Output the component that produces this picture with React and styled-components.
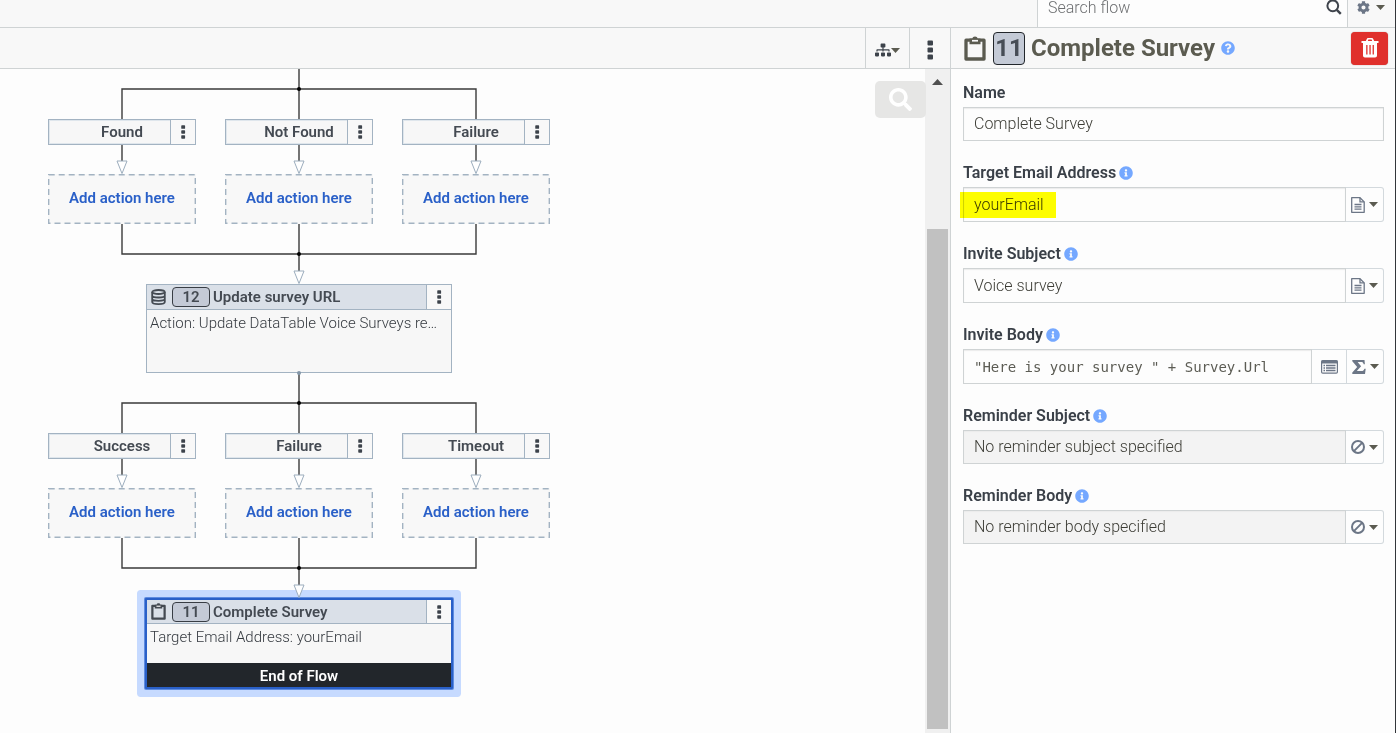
import React from 'react';
import styled, { createGlobalStyle, css } from 'styled-components';
import { FaCog, FaInfoCircle, FaQuestionCircle, FaSitemap, FaSearch } from 'react-icons/fa';

const color = {
  page: '#fdfdfd',
  bar: '#f8f8f8',
  line: '#cfd3d4',
  ink: '#444a52',
  olive: '#5b5b50',
  slate: '#6c7686',
  node: '#a3b3c2',
  blue: '#2a60c8',
  info: '#75a8ff',
};

const GlobalStyle = createGlobalStyle`
  *, *::before, *::after { box-sizing: border-box; }
  body { margin: 0; background: ${color.page}; color: ${color.ink}; font: 16px/20px Roboto, sans-serif; }
  button, input { font: inherit; color: inherit; margin: 0; padding: 0; border: 0; background: none; border-radius: 0; outline: 0; }
  button { cursor: pointer; }
  svg { display: block; flex: none; }
`;

/* ---------- icons ---------- */

const Caret = () => (
  <svg width="9" height="5" viewBox="0 0 9 5" fill={color.olive}><path d="M0 0h9L4.500 5z" /></svg>
);

const Dots = ({ size }) => (
  <svg width={size} height={size} viewBox="0 0 20 20" fill="currentColor">
    <rect x="7.500" y="0.500" width="5.500" height="5" rx="1" />
    <rect x="7.500" y="7.500" width="5.500" height="5" rx="1" />
    <rect x="7.500" y="14.500" width="5.500" height="5" rx="1" />
  </svg>
);

const Clipboard = ({ width, height }) => (
  <svg width={width} height={height} viewBox="0 0 22 25" fill="none" stroke="currentColor">
    <path d="M2 4.200h18v18.800H2z" strokeWidth="3.300" strokeLinejoin="round" />
    <path d="M5.500 2.600h2.800C8.600 1.100 9.600.4 11 .4s2.400.7 2.700 2.200h2.800v5.600h-11z" fill="currentColor" stroke="none" />
    <path d="M8 3.900h6v1.700H8z" fill={color.bar} stroke="none" />
  </svg>
);

const Database = () => (
  <svg width="15" height="16" viewBox="0 0 15 16" fill="none" stroke="currentColor" strokeWidth="1.800">
    <ellipse cx="7.500" cy="3" rx="6.300" ry="2" />
    <path d="M1.200 3v10c0 1.200 2.800 2.100 6.300 2.100s6.300-.9 6.300-2.100V3M1.200 6.500c0 1.200 2.800 2 6.300 2s6.300-.8 6.300-2M1.200 9.800c0 1.200 2.800 2 6.300 2s6.300-.8 6.300-2" />
  </svg>
);

const Magnifier = () => (
  <svg width="16" height="16" viewBox="0 0 16 16" fill="none" stroke="#3f444c" strokeWidth="2">
    <circle cx="6.800" cy="6.800" r="5.400" />
    <path d="M10.800 10.800l4 4" strokeWidth="2.400" />
  </svg>
);

const Trash = () => (
  <svg width="18" height="20" viewBox="0 0 18 20" fill="#fff">
    <path d="M.5 3h4.300l1-2.100C6 .3 6.400 0 7 0h4c.6 0 1 .3 1.200.9l1 2.100h4.300v2H16v12.500c0 1.200-.8 2-1.900 2H3.900C2.800 19.500 2 18.700 2 17.500V5H.5zM6.800 3h4.400l-.6-1.400H7.400z" fillRule="evenodd" />
    <path d="M5.200 7h1.300v9.500H5.200zM8.400 7h1.300v9.500H8.400zM11.600 7h1.300v9.500h-1.300z" fill="#e0302c" />
  </svg>
);

const FileIcon = () => (
  <svg width="14" height="16" viewBox="0 0 14 16" fill="none" stroke={color.slate} strokeWidth="1.300">
    <path d="M.7.700h8.300l4.200 4.200v10.400H.7z" strokeLinejoin="round" />
    <path d="M9 .7v4.200h4.200" />
    <path d="M3.500 7.500h7M3.500 9.800h7M3.500 12.100h7" />
  </svg>
);

const ListIcon = () => (
  <svg width="17" height="14" viewBox="0 0 17 14" fill="none" stroke={color.slate}>
    <rect x=".6" y=".6" width="15.800" height="12.600" rx="1.200" strokeWidth="1.200" />
    <path d="M.6 2h15.800" strokeWidth="3" />
    <path d="M2.500 5.500h1.500M2.500 8h1.500M2.500 10.500h1.500M5 5.500h9.500M5 8h9.500M5 10.500h9.500" strokeWidth="1.300" />
  </svg>
);

const Sigma = () => (
  <svg width="14" height="14" viewBox="0 0 14 14" fill={color.slate}>
    <path d="M.3 0h12.200l.4 4.300h-1.200C11.300 2.700 10.600 2.100 9 2.100H5.600l3.500 4.200-4.300 4.700h4.700c1.600 0 2.400-.6 2.900-2.300h1.300L13 14H.3v-1.600l4.900-5.300L.3 1.300z" />
  </svg>
);

const Ban = () => (
  <svg width="14" height="14" viewBox="0 0 14 14" fill="none" stroke={color.slate} strokeWidth="2">
    <circle cx="7" cy="7" r="6" />
    <path d="M2.900 11.100l8.200-8.200" />
  </svg>
);

/* ---------- page frame ---------- */

const Page = styled.div`
  display: flex;
  flex-direction: column;
  height: 100vh;
  border-right: 1px solid #33363a;
  overflow: hidden;
`;

const TopBar = styled.header`
  display: flex;
  justify-content: flex-end;
  align-items: flex-end;
  height: 28px;
  flex: none;
  overflow: hidden;
  background: ${color.bar};
  border-bottom: 1px solid ${color.line};
`;

const SearchBox = styled.label`
  display: flex;
  align-items: center;
  width: 311px;
  height: 40px;
  padding: 0 5px 0 10px;
  background: ${color.page};
  border: solid ${color.line};
  border-width: 0 1px;
  input { flex: 1; min-width: 0; padding-top: 1px; font-weight: 300; }
  input::placeholder { color: #6d6f71; opacity: 1; }
`;

const SettingsButton = styled.button`
  display: flex;
  align-items: center;
  justify-content: center;
  gap: 6px;
  width: 47px;
  height: 40px;
  padding-right: 2px;
  color: ${color.slate};
`;

const Body = styled.div`
  display: flex;
  flex: 1;
  min-height: 0;
`;

const Workspace = styled.main`
  display: flex;
  flex-direction: column;
  flex: 1;
  min-width: 0;
`;

const barStyle = css`
  display: flex;
  flex: none;
  height: 41px;
  background: ${color.bar};
  border-bottom: 1px solid ${color.line};
`;

const Toolbar = styled.div`
  ${barStyle}
  justify-content: flex-end;
`;

const ToolButton = styled.button`
  display: flex;
  align-items: center;
  justify-content: center;
  width: ${(p) => p.$width}px;
  padding-top: 4px;
  border-left: 1px solid ${color.line};
  color: #3d434b;
`;

const Stage = styled.div`
  position: relative;
  display: flex;
  flex: 1;
  min-height: 0;
`;

const Canvas = styled.div`
  position: relative;
  flex: 1;
  min-width: 0;
  overflow: hidden;
`;

const ZoomButton = styled.button`
  position: absolute;
  top: 12px;
  right: 24px;
  display: grid;
  place-items: center;
  width: 51px;
  height: 37px;
  border-radius: 5px;
  background: #e6e6e5;
  color: #fff;
`;

const ScrollTrack = styled.div`
  display: flex;
  flex-direction: column;
  align-items: center;
  justify-content: space-between;
  width: 25px;
  padding: 10px 2px 4px;
  background: #f0f0f0;
`;

const ScrollThumb = styled.div`
  width: 21px;
  height: 77%;
  background: #c1c1c1;
`;

/* ---------- flow diagram ---------- */

const Wires = styled.svg`
  position: absolute;
  left: 0;
  top: 0;
  pointer-events: none;
`;

const Placed = styled.div`
  position: absolute;
  left: ${(p) => p.$x}px;
  top: ${(p) => p.$y}px;
`;

const Branch = styled(Placed)`
  display: flex;
  width: 148px;
  height: 26px;
  background: #f7f7f7;
  border: 1px solid ${color.node};
  box-shadow: inset 0 0 0 1px #dfe6ec;
`;

const BranchName = styled.span`
  flex: 1;
  padding-left: 25px;
  font-size: 15px;
  line-height: 24px;
  font-weight: 600;
  text-align: center;
`;

const MenuButton = styled.button`
  display: grid;
  place-items: center;
  width: 25px;
  border-left: 1px solid ${color.node};
  background: ${color.bar};
  color: #3d434b;
`;

const AddSlot = styled.button`
  position: absolute;
  left: ${(p) => p.$x}px;
  top: ${(p) => p.$y}px;
  width: 148px;
  height: 50px;
  padding-bottom: 2px;
  background: #f8f8f8;
  color: ${color.blue};
  font-size: 15px;
  font-weight: 600;
  svg { position: absolute; inset: 0; }
`;

const NodeHead = styled.div`
  display: flex;
  align-items: stretch;
  height: 25px;
  flex: none;
  background: #dae0e8;
  border-bottom: 1px solid ${color.node};
`;

const ActionNode = styled(Placed)`
  display: flex;
  flex-direction: column;
  width: 306px;
  height: 89px;
  background: #f7f7f7;
  border: 1px solid ${color.node};
  ${(p) => p.$selected && css`
    width: 308px;
    height: 91px;
    border: 2px solid ${color.blue};
    box-shadow: 0 0 0 1px #5f8ce0, 0 0 0 8px #c6daff;
    border-radius: 1px;
    ${NodeHead} { height: 24px; }
  `}
`;

const NodeTitle = styled.div`
  display: flex;
  align-items: center;
  flex: 1;
  padding-left: 4px;
  font-size: 15px;
  font-weight: 600;
`;

const NodeBadge = styled.span`
  width: 38px;
  height: 20px;
  margin: 0 3px 0 6px;
  border: 1px solid #383d44;
  border-radius: 4px;
  background: #c4cad6;
  line-height: 18px;
  text-align: center;
`;

const NodeText = styled.p`
  flex: 1;
  margin: 0;
  padding: 3px 8px 0 3px;
  color: #34393f;
  font-size: 15px;
  font-weight: 300;
  white-space: nowrap;
  overflow: hidden;
  text-overflow: ellipsis;
`;

const EndBar = styled.div`
  height: 24px;
  padding-top: 1px;
  background: #22262b;
  color: #fff;
  font-size: 15px;
  line-height: 24px;
  font-weight: 600;
  text-align: center;
`;

/* ---------- side panel ---------- */

const Panel = styled.aside`
  display: flex;
  flex-direction: column;
  width: 445px;
  flex: none;
  border-left: 1px solid ${color.line};
`;

const PanelHead = styled.div`
  ${barStyle}
  align-items: center;
  padding: 0 7px 0 13px;
  color: ${color.olive};
`;

const PanelTitle = styled.h1`
  display: flex;
  align-items: center;
  flex: 1;
  margin: 0;
  font-size: 24px;
  line-height: 32px;
  font-weight: 700;
`;

const PanelBadge = styled.span`
  width: 32px;
  margin: 0 6px 0 7px;
  border: 1px solid #22262b;
  border-radius: 4px;
  background: #c4cad6;
  color: #474d56;
  line-height: 31px;
  text-align: center;
`;

const TitleHelp = styled(FaQuestionCircle)`
  margin-left: 6px;
  color: ${color.info};
`;

const DeleteButton = styled.button`
  display: grid;
  place-items: center;
  width: 37px;
  height: 33px;
  border-radius: 4px;
  background: #e0302c;
  box-shadow: 0 0 1px #9a6a68;
`;

const Form = styled.form`
  display: flex;
  flex-direction: column;
  gap: 22px;
  padding: 14px 11px 14px 12px;
`;

const FieldLabel = styled.label`
  display: flex;
  align-items: center;
  gap: 3px;
  height: 20px;
  margin-bottom: 4px;
  font-weight: 600;
  color: #3a4048;
  svg { color: ${color.info}; }
`;

const Control = styled.div`
  position: relative;
  display: flex;
  height: ${(p) => (p.$tall ? 35 : 34)}px;
`;

const TextInput = styled.input`
  flex: 1;
  min-width: 0;
  padding: 0 10px;
  border: 1px solid ${color.line};
  box-shadow: inset 0 1px 1px #ebebeb;
  color: #3c3c35;
  font-weight: 300;
  &:read-only { background: #f3f3f3; }
  ${(p) => p.$code && css`
    color: #5c5c54;
    font-family: "DejaVu Sans Mono", "Liberation Mono", monospace;
    font-size: 14px;
    font-weight: 400;
  `}
`;

const Highlight = styled.span`
  position: absolute;
  left: -3px;
  top: 5px;
  width: 96px;
  height: 26px;
  background: #ff0;
  mix-blend-mode: multiply;
  pointer-events: none;
`;

const AddOn = styled.button`
  display: flex;
  align-items: center;
  justify-content: center;
  gap: 4px;
  width: ${(p) => p.$width}px;
  border: 1px solid #d3d9dd;
  border-left: 0;
  &:last-child { border-radius: 0 3px 3px 0; }
`;

/* ---------- content ---------- */

const COLUMNS = [48, 225, 402];

const WireGroup = ({ top, start }) => {
  const mids = COLUMNS.map((x) => x + 74);
  const [left, center, right] = mids;
  return (
    <g>
      <g fill="none" stroke="#3a3a3a" strokeWidth="1.400">
        <path d={`M${center} ${start}V${top + 30}M${left} ${top + 30}V${top}H${right}V${top + 30}`} />
        {mids.map((x) => <path key={x} d={`M${x} ${top + 56}V${top + 72}`} />)}
        <path d={`M${left} ${top + 135}V${top + 165}H${right}V${top + 135}M${center} ${top + 135}V${top + 183}`} />
      </g>
      <circle cx={center} cy={top} r="2" />
      <circle cx={center} cy={top + 165} r="2" />
      <g fill="#fff" stroke="#9cadbd">
        {mids.map((x) => <path key={x} d={`M${x - 5} ${top + 72}h10l-5 12.500z`} />)}
        <path d={`M${center - 5} ${top + 182}h10l-5 12.500z`} />
      </g>
    </g>
  );
};

const BranchRow = ({ names, top }) => names.map((name, i) => (
  <React.Fragment key={name}>
    <Branch $x={COLUMNS[i]} $y={top}>
      <BranchName>{name}</BranchName>
      <MenuButton aria-label={`${name} menu`}><Dots size={14} /></MenuButton>
    </Branch>
    <AddSlot $x={COLUMNS[i]} $y={top + 55}>
      <svg width="148" height="50" fill="none" stroke="#a3b3c2" strokeWidth="1.400" strokeDasharray="6 4">
        <rect x=".7" y=".7" width="146.600" height="48.600" />
      </svg>
      Add action here
    </AddSlot>
  </React.Fragment>
));

const Action = ({ x, y, icon, number, title, text, selected, end }) => (
  <ActionNode $x={x} $y={y} $selected={selected}>
    <NodeHead>
      <NodeTitle>{icon}<NodeBadge>{number}</NodeBadge>{title}</NodeTitle>
      <MenuButton aria-label={`${title} menu`}><Dots size={14} /></MenuButton>
    </NodeHead>
    <NodeText>{text}</NodeText>
    {end && <EndBar>End of Flow</EndBar>}
  </ActionNode>
);

const Field = ({ id, label, value, info = true, tall, code, readOnly, highlight, children }) => (
  <div>
    <FieldLabel htmlFor={id}>{label}{info && <FaInfoCircle size={14} />}</FieldLabel>
    <Control $tall={tall}>
      <TextInput id={id} defaultValue={value} $code={code} readOnly={readOnly} />
      {highlight && <Highlight />}
      {children}
    </Control>
  </div>
);

export default function App() {
  return (
    <Page>
      <GlobalStyle />
      <TopBar>
        <SearchBox>
          <input placeholder="Search flow" aria-label="Search flow" />
          <Magnifier />
        </SearchBox>
        <SettingsButton aria-label="Settings"><FaCog size={13} /><Caret /></SettingsButton>
      </TopBar>
      <Body>
        <Workspace>
          <Toolbar>
            <ToolButton $width={44} aria-label="Layout"><FaSitemap size={16} /><Caret /></ToolButton>
            <ToolButton $width={41} aria-label="More"><Dots size={20} /></ToolButton>
          </Toolbar>
          <Stage>
            <Canvas>
              <BranchRow names={['Found', 'Not Found', 'Failure']} top={50} />
              <BranchRow names={['Success', 'Failure', 'Timeout']} top={364} />
              <Action x={146} y={215} icon={<Database />} number="12" title="Update survey URL" text="Action: Update DataTable Voice Surveys re…" />
              <Action x={145} y={529} icon={<Clipboard width={15} height={17} />} number="11" title="Complete Survey" text="Target Email Address: yourEmail" selected end />
              <Wires width="600" height="640">
                <WireGroup top={20} start={0} />
                <WireGroup top={334} start={304} />
                <circle cx="299" cy="304" r="2" fill="#8497a8" />
              </Wires>
            </Canvas>
            <ScrollTrack>
              <svg width="11" height="6" viewBox="0 0 11 6" fill="#505050"><path d="M5.500 0L11 6H0z" /></svg>
              <ScrollThumb />
            </ScrollTrack>
            <ZoomButton aria-label="Zoom"><FaSearch size={23} /></ZoomButton>
          </Stage>
        </Workspace>
        <Panel>
          <PanelHead>
            <PanelTitle>
              <Clipboard width={22} height={25} />
              <PanelBadge>11</PanelBadge>
              Complete Survey
              <TitleHelp size={14} />
            </PanelTitle>
            <DeleteButton aria-label="Delete"><Trash /></DeleteButton>
          </PanelHead>
          <Form>
            <Field id="name" label="Name" value="Complete Survey" info={false} />
            <Field id="email" label="Target Email Address" value="yourEmail" tall highlight>
              <AddOn type="button" $width={38} aria-label="Value type"><FileIcon /><Caret /></AddOn>
            </Field>
            <Field id="subject" label="Invite Subject" value="Voice survey" tall>
              <AddOn type="button" $width={38} aria-label="Value type"><FileIcon /><Caret /></AddOn>
            </Field>
            <Field id="body" label="Invite Body" value={'"Here is your survey " + Survey.Url'} tall code>
              <AddOn type="button" $width={35} aria-label="Open editor"><ListIcon /></AddOn>
              <AddOn type="button" $width={37} aria-label="Value type"><Sigma /><Caret /></AddOn>
            </Field>
            <Field id="rsubject" label="Reminder Subject" value="No reminder subject specified" readOnly>
              <AddOn type="button" $width={38} aria-label="Value type"><Ban /><Caret /></AddOn>
            </Field>
            <Field id="rbody" label="Reminder Body" value="No reminder body specified" readOnly>
              <AddOn type="button" $width={38} aria-label="Value type"><Ban /><Caret /></AddOn>
            </Field>
          </Form>
        </Panel>
      </Body>
    </Page>
  );
}
